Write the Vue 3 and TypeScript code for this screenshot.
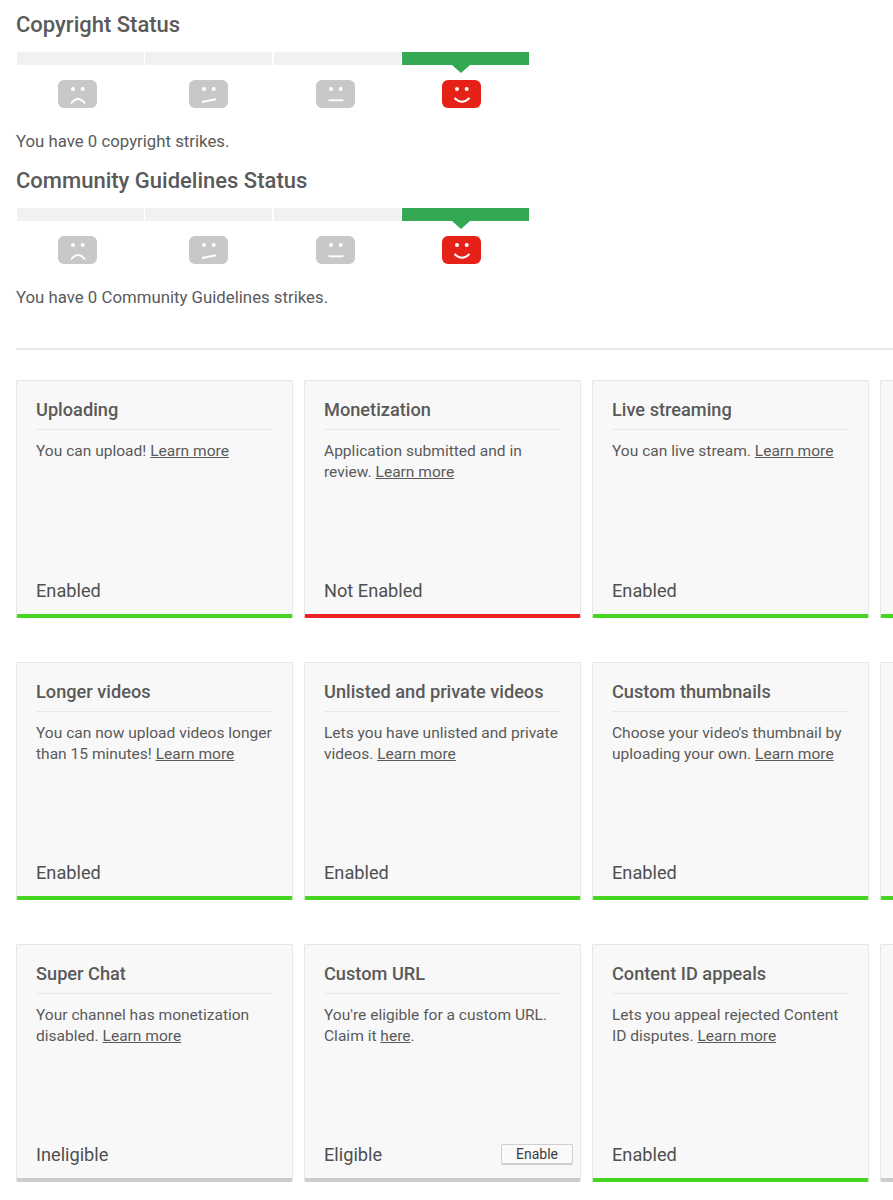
<script setup lang="ts">
type Mood = 'sad' | 'meh' | 'flat' | 'happy'
type State = 'on' | 'off' | 'idle'

interface Part {
  text: string
  link?: boolean
}

interface Feature {
  title: string
  body: Part[]
  status: string
  state: State
  action?: string
}

const moods: Mood[] = ['sad', 'meh', 'flat', 'happy']

const statuses = [
  { title: 'Copyright Status', note: 'You have 0 copyright strikes.' },
  { title: 'Community Guidelines Status', note: 'You have 0 Community Guidelines strikes.' }
]

const mouths: Record<Mood, string> = {
  sad: 'M13 23.5q7-9 14 0',
  meh: 'M13 22l14-2.8',
  flat: 'M12.5 20.3h15',
  happy: 'M12.5 18q7.5 7.5 15 0'
}

const more = { text: 'Learn more', link: true }

const features: Feature[] = [
  { title: 'Uploading', body: [{ text: 'You can upload! ' }, more], status: 'Enabled', state: 'on' },
  { title: 'Monetization', body: [{ text: 'Application submitted and in review. ' }, more], status: 'Not Enabled', state: 'off' },
  { title: 'Live streaming', body: [{ text: 'You can live stream. ' }, more], status: 'Enabled', state: 'on' },
  { title: '', body: [], status: '', state: 'on' },
  { title: 'Longer videos', body: [{ text: 'You can now upload videos longer than 15 minutes! ' }, more], status: 'Enabled', state: 'on' },
  { title: 'Unlisted and private videos', body: [{ text: 'Lets you have unlisted and private videos. ' }, more], status: 'Enabled', state: 'on' },
  { title: 'Custom thumbnails', body: [{ text: "Choose your video's thumbnail by uploading your own. " }, more], status: 'Enabled', state: 'on' },
  { title: '', body: [], status: '', state: 'on' },
  { title: 'Super Chat', body: [{ text: 'Your channel has monetization disabled. ' }, more], status: 'Ineligible', state: 'idle' },
  {
    title: 'Custom URL',
    body: [{ text: "You're eligible for a custom URL. Claim it " }, { text: 'here', link: true }, { text: '.' }],
    status: 'Eligible',
    state: 'idle',
    action: 'Enable'
  },
  { title: 'Content ID appeals', body: [{ text: 'Lets you appeal rejected Content ID disputes. ' }, more], status: 'Enabled', state: 'on' },
  { title: '', body: [], status: '', state: 'idle' }
]
</script>

<template>
  <div class="page">
    <section v-for="item in statuses" :key="item.title" class="status">
      <h2 class="status__title">{{ item.title }}</h2>
      <div class="meter">
        <div v-for="mood in moods" :key="mood" :class="['meter__seg', { 'meter__seg--active': mood === 'happy' }]"></div>
      </div>
      <div class="faces">
        <div v-for="mood in moods" :key="mood" :class="['faces__cell', `faces__cell--${mood}`]">
          <svg class="face" viewBox="0 0 39 28" width="39" height="28">
            <rect width="39" height="28" rx="6" :fill="mood === 'happy' ? '#e62117' : '#c8c8c8'" />
            <circle cx="15" cy="9" r="2" fill="#fff" />
            <circle cx="24.7" cy="9" r="2" fill="#fff" />
            <path :d="mouths[mood]" fill="none" stroke="#fff" stroke-width="1.9" />
          </svg>
        </div>
      </div>
      <p class="status__note">{{ item.note }}</p>
    </section>

    <hr class="divider" />

    <div class="grid">
      <article v-for="(card, i) in features" :key="i" :class="['card', `card--${card.state}`]">
        <h3 class="card__title">{{ card.title }}</h3>
        <p class="card__body">
          <template v-for="part in card.body" :key="part.text">
            <a v-if="part.link" class="card__link">{{ part.text }}</a>
            <template v-else>{{ part.text }}</template>
          </template>
        </p>
        <div class="card__foot">
          <span class="card__status">{{ card.status }}</span>
          <button v-if="card.action" class="card__btn" type="button">{{ card.action }}</button>
        </div>
      </article>
    </div>
  </div>
</template>

<style>
html,
body {
  margin: 0;
  background: #fff;
}
</style>

<style scoped>
.page {
  width: 893px;
  height: 1200px;
  overflow: hidden;
  padding: 13px 0 0 16px;
  box-sizing: border-box;
  font-family: Roboto, "Liberation Sans", sans-serif;
  color: #555;
}

.status {
  height: 155.5px;
}

.status__title {
  margin: 0;
  font-size: 22px;
  line-height: 24px;
  font-weight: 500;
  color: #5a5a5a;
}

.meter {
  display: grid;
  grid-template-columns: repeat(4, 127px);
  gap: 1.4px;
  width: 513px;
  margin: 15px 0 0 1px;
}

.meter__seg {
  height: 13px;
  background: #f1f1f1;
}

.meter__seg--active {
  position: relative;
  background: #34a853;
}

.meter__seg--active::after {
  content: "";
  position: absolute;
  left: 50px;
  top: 13px;
  border-left: 9px solid transparent;
  border-right: 9px solid transparent;
  border-top: 8px solid #34a853;
}

.faces {
  display: flex;
  margin-top: 15px;
  height: 28px;
}

.faces__cell {
  width: 39px;
}

.faces__cell--sad {
  margin-left: 42px;
}

.faces__cell--meh {
  margin-left: 92px;
}

.faces__cell--flat {
  margin-left: 88px;
}

.faces__cell--happy {
  margin-left: 87px;
}

.face {
  display: block;
}

.status__note {
  margin: 23px 0 0;
  font-size: 16.8px;
  line-height: 20px;
  color: #5a5a5a;
}

.divider {
  width: 877px;
  height: 2px;
  margin: 24px 0 0;
  border: 0;
  background: #e8e8e8;
}

.grid {
  display: grid;
  grid-template-columns: repeat(4, 277px);
  grid-auto-rows: 238px;
  column-gap: 11px;
  row-gap: 44px;
  margin-top: 30px;
}

.card {
  display: flex;
  flex-direction: column;
  box-sizing: border-box;
  padding: 18px 20px 0 19px;
  background: #f8f8f8;
  border: 1px solid #e6e6e6;
  border-bottom: 4px solid #ccc;
  border-radius: 2px;
}

.card--on {
  border-bottom-color: #44d620;
}

.card--off {
  border-bottom-color: #ea2424;
}

.card--idle {
  border-bottom-color: #ccc;
}

.card__title {
  margin: 0;
  height: 31px;
  box-sizing: border-box;
  padding-bottom: 8px;
  border-bottom: 1px solid #e8e8e8;
  font-size: 18.2px;
  line-height: 22px;
  font-weight: 500;
  color: #5a5a5a;
}

.card__body {
  margin: 11px 0 0;
  font-size: 15.55px;
  line-height: 20.7px;
  color: #5a5a5a;
}

.card__link {
  text-decoration: underline;
}

.card__foot {
  display: flex;
  align-items: center;
  justify-content: space-between;
  height: 24px;
  margin-top: auto;
  margin-bottom: 11px;
  margin-right: -13px;
}

.card__status {
  font-size: 18.2px;
  line-height: 24px;
  font-weight: 400;
  color: #4f4f4f;
}

.card__btn {
  width: 72px;
  height: 21px;
  margin-bottom: 2px;
  padding: 0;
  font-family: inherit;
  font-size: 14px;
  color: #3c3c3c;
  background: #fafafa;
  border: 1px solid #d0d0d0;
  border-bottom-width: 2px;
  border-radius: 2px;
}
</style>
